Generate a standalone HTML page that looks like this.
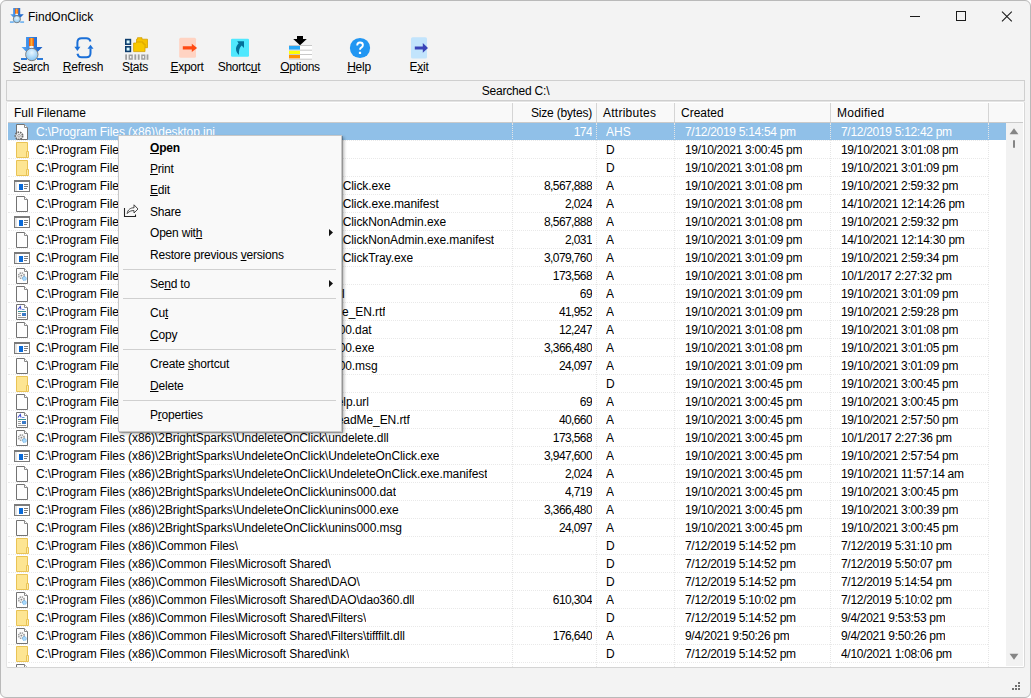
<!DOCTYPE html><html><head><meta charset="utf-8"><style>
*{margin:0;padding:0;box-sizing:border-box}
html,body{width:1031px;height:698px;overflow:hidden;background:#fff}
body{font-family:"Liberation Sans",sans-serif;font-size:12px;color:#000;position:relative}
.a{position:absolute;white-space:nowrap}
#win{position:absolute;left:0;top:0;width:1031px;height:698px;background:#f3f3f3;border-radius:6px;overflow:hidden}
#frame{position:absolute;left:0;top:0;width:1031px;height:698px;border:1px solid #b9b9b9;border-radius:6px}
.tb{position:absolute;top:59px;height:16px;line-height:16px;font-size:12px;text-align:center;letter-spacing:-0.25px}
.u{text-decoration:underline;text-underline-offset:1px}
.row{position:absolute;left:8px;width:998px;height:18px;}
.c{position:absolute;top:0;height:18px;line-height:18px;white-space:nowrap;overflow:hidden;padding-top:1px}
.r{text-align:right}
.mi{position:absolute;left:150px;height:20px;line-height:20px;font-size:12px;letter-spacing:-0.2px}
.sep{position:absolute;left:123px;width:213px;height:1px;background:#d0d0d0}
</style></head><body><div id="win">

<svg class="a" style="left:8px;top:6px" width="18" height="18" viewBox="0 0 28 28">
<path d="M8 3h11v10h5.5l-10.5 10.5L3.5 13H8z" fill="url(#gsh)"/>
<rect x="11" y="4" width="5" height="8.5" fill="url(#gor)"/>
<rect x="11.5" y="12" width="4" height="2" fill="#f4f4f4"/>
<circle cx="13.8" cy="20.5" r="5.6" fill="url(#glens)" stroke="#6a6a6a" stroke-width="1.2"/>
<rect x="3" y="24" width="6" height="2" fill="#4aa0f0"/><rect x="19" y="24" width="6" height="2" fill="#4aa0f0"/>
</svg>
<div class="a" style="left:28px;top:9px;font-size:12px;line-height:16px">FindOnClick</div>
<svg class="a" style="left:900px;top:6px" width="130" height="22">
<path d="M10 10.5h10" stroke="#1a1a1a" stroke-width="1"/>
<rect x="56.5" y="5.5" width="9" height="9" fill="none" stroke="#1a1a1a"/>
<path d="M102 5.6l9.8 9.8M111.8 5.6l-9.8 9.8" stroke="#1a1a1a" stroke-width="1.05"/>
</svg>


<svg class="a" style="left:18px;top:34px" width="28" height="28" viewBox="0 0 28 28">
<defs><linearGradient id="gsh" x1="0" x2="1"><stop offset="0" stop-color="#5aa8f4"/><stop offset="0.5" stop-color="#2f7fe0"/><stop offset="1" stop-color="#1c5fc4"/></linearGradient>
<linearGradient id="gor" x1="0" x2="1"><stop offset="0" stop-color="#e84a10"/><stop offset="0.5" stop-color="#ffb030"/><stop offset="1" stop-color="#e85010"/></linearGradient>
<radialGradient id="glens" cx="0.5" cy="0.35" r="0.6"><stop offset="0" stop-color="#e8f6ff"/><stop offset="1" stop-color="#8cc8f4"/></radialGradient></defs>
<path d="M8 3h11v10h5.5l-10.5 10.5L3.5 13H8z" fill="url(#gsh)"/>
<rect x="11" y="4" width="5" height="8.5" fill="url(#gor)"/>
<rect x="11.5" y="12" width="4" height="2" fill="#f4f4f4"/>
<circle cx="13.8" cy="20.5" r="6.2" fill="url(#glens)" stroke="#7a7a7a" stroke-width="0.9"/>
<rect x="3" y="24" width="6" height="2" fill="#2a7ad8"/><rect x="19" y="24" width="6" height="2" fill="#2a7ad8"/>
</svg>
<svg class="a" style="left:70px;top:34px" width="28" height="28" viewBox="0 0 28 28">
<path d="M7.4 13V8.4Q7.4 4.2 11.6 4.2H16.4Q19.6 4.2 20.5 7.4" fill="none" stroke="#1a6fd8" stroke-width="2"/>
<path d="M4.4 12.8H10.4L7.4 16.9z" fill="#1a6fd8"/>
<path d="M17.5 14.8H23.5L20.5 10.7z" fill="#1a6fd8"/>
<path d="M20.5 14.6V19Q20.5 23.3 16.4 23.3H11.6Q8.2 23.3 7.4 19.8" fill="none" stroke="#1a6fd8" stroke-width="2"/>
</svg>
<svg class="a" style="left:122px;top:34px" width="28" height="28" viewBox="0 0 28 28">
<rect x="3.8" y="5.6" width="4.6" height="4.6" fill="#d8f8ff" stroke="#0c3c6c" stroke-width="1.6"/>
<rect x="3.8" y="12.8" width="4.6" height="4.6" fill="#d8f8ff" stroke="#0c3c6c" stroke-width="1.6"/>
<path d="M14.5 5.2h1v-1.5h4.5v1.5h5.5v8.5h-11z" fill="#f6c200" stroke="#d4a000" stroke-width="0.8"/>
<path d="M11.6 9h2l1.4-1h6v2h2v7.6h-11.4z" fill="#f8c800" stroke="#d4a000" stroke-width="0.8"/>
<g fill="#a0a0a0"><rect x="3.2" y="20.4" width="1.8" height="5.4"/><path d="M6.6 20.4h4.2v5.4h-4.2zM8 22v2.2h1.4v-2.2z" fill-rule="evenodd"/><rect x="12.4" y="20.4" width="1.8" height="5.4"/><rect x="15.8" y="20.4" width="1.8" height="5.4"/><path d="M19.2 20.4h4.2v5.4h-4.2zM20.6 22v2.2h1.4v-2.2z" fill-rule="evenodd"/><rect x="24.6" y="20.4" width="1.8" height="5.4"/></g>
</svg>
<svg class="a" style="left:174px;top:34px" width="28" height="28" viewBox="0 0 28 28">
<rect x="5.2" y="3.8" width="16.8" height="20" rx="1.5" fill="#ffd3c2"/>
<path d="M8.8 12.2h9v-2.4l5.3 4.1-5.3 4.1v-2.5h-9z" fill="#ff4a12"/>
</svg>
<svg class="a" style="left:226px;top:34px" width="28" height="28" viewBox="0 0 28 28">
<rect x="5" y="4.8" width="18" height="18" rx="1.2" fill="#50e8fe"/>
<path d="M11.2 7.2H18V14L15.6 11.6C13.6 13.6 12.6 16.4 13 21C11 19.2 9.8 16.8 10 14.2C10.2 12.4 11.2 10.8 12.6 9.4z" fill="#04709a"/>
</svg>
<svg class="a" style="left:286px;top:33px" width="30" height="30" viewBox="0 0 30 30">
<path d="M11 3h6v3h3.8l-6.8 6.3L7.2 6H11z" fill="#000"/>
<rect x="3" y="12.5" width="23" height="14.2" fill="#fff"/>
<g fill="#c8c8c8"><rect x="3" y="12" width="23" height="1"/><rect x="3" y="16.7" width="23" height="1"/><rect x="3" y="21" width="23" height="1"/><rect x="3" y="25.7" width="23" height="1"/></g>
<rect x="3" y="13" width="11" height="3.6" fill="#28a8f8"/>
<rect x="3" y="17.8" width="11" height="3.2" fill="#ffff00"/>
<rect x="3" y="22" width="11" height="3.4" fill="#ff9200"/>
</svg>
<svg class="a" style="left:346px;top:34px" width="28" height="28" viewBox="0 0 28 28">
<circle cx="14" cy="14" r="10.1" fill="#2196f2"/>
<path d="M11.2 11.4Q11.2 8.5 14 8.5Q16.9 8.5 16.9 11Q16.9 12.6 15.2 13.6Q14 14.3 14 15.8" fill="none" stroke="#fff" stroke-width="1.9"/>
<rect x="12.9" y="17.8" width="2.2" height="2.2" fill="#fff"/>
</svg>
<svg class="a" style="left:406px;top:34px" width="28" height="28" viewBox="0 0 28 28">
<rect x="5" y="3.2" width="16" height="21.3" rx="1.5" fill="#c2e4fc"/>
<path d="M8.8 12.4h8v-3.4l5.2 4.9-5.2 4.9v-3.4h-8z" fill="#3a44b8"/>
</svg>

<div class="tb" style="left:-9px;width:80px"><span class="u">S</span>earch</div>
<div class="tb" style="left:43px;width:80px"><span class="u">R</span>efresh</div>
<div class="tb" style="left:95px;width:80px">S<span class="u">t</span>ats</div>
<div class="tb" style="left:147px;width:80px"><span class="u">E</span>xport</div>
<div class="tb" style="left:199px;width:80px">Shortc<span class="u">u</span>t</div>
<div class="tb" style="left:260px;width:80px"><span class="u">O</span>ptions</div>
<div class="tb" style="left:319px;width:80px"><span class="u">H</span>elp</div>
<div class="tb" style="left:379px;width:80px">E<span class="u">x</span>it</div>
<div class="a" style="left:6px;top:80px;width:1019px;height:21px;border:1px solid #cfcfcf;background:#f3f3f3"></div>
<div class="a" style="left:6px;top:83px;width:1019px;text-align:center;line-height:16px;letter-spacing:-0.2px">Searched C:\</div>
<div class="a" style="left:6px;top:101px;width:1019px;height:567px;background:#fff;border:1px solid #e4e4e4;border-right-color:#d8d8d8;border-bottom-color:#d4d4d4;border-radius:2px"></div>
<div class="a" style="left:8px;top:103px;width:1015px;height:20px;background:#f9f9f9;border-bottom:1px solid #cacaca"></div>
<div class="a" style="left:14px;top:105px;line-height:16px;letter-spacing:0px">Full Filename</div>
<div class="a" style="right:439px;top:105px;line-height:16px;letter-spacing:-0.2px">Size (bytes)</div>
<div class="a" style="left:603px;top:105px;line-height:16px;letter-spacing:0.25px">Attributes</div>
<div class="a" style="left:681px;top:105px;line-height:16px;letter-spacing:0px">Created</div>
<div class="a" style="left:837px;top:105px;line-height:16px;letter-spacing:0.25px">Modified</div>
<div class="a" style="left:512px;top:103px;width:1px;height:19px;background:#d5d5d5"></div>
<div class="a" style="left:596px;top:103px;width:1px;height:19px;background:#d5d5d5"></div>
<div class="a" style="left:674px;top:103px;width:1px;height:19px;background:#d5d5d5"></div>
<div class="a" style="left:830px;top:103px;width:1px;height:19px;background:#d5d5d5"></div>
<div class="a" style="left:988px;top:103px;width:1px;height:19px;background:#d5d5d5"></div>
<div class="a" style="left:8px;top:122px;width:998px;height:545px;overflow:hidden">
<div class="a" style="left:-8px;top:-122px;width:1031px;height:698px">
<div class="a" style="left:8px;top:123px;width:998px;height:17px;background:#90c0e8"></div>
<div class="a" style="left:14px;top:124px;width:16px;height:16px"><svg width="16" height="16" viewBox="0 0 16 16"><path d="M2.5 0.5H10.5L13.5 3.5V15.5H2.5z" fill="#fdfdfd" stroke="#727272"/><path d="M10.5 0.5V3.5H13.5" fill="#fff" stroke="#8a8a8a"/><circle cx="5" cy="11.8" r="3.6" fill="#f0f0f0" stroke="#6a6a6a" stroke-width="1.8" stroke-dasharray="1.6 0.9"/><circle cx="5" cy="11.8" r="1.3" fill="#fff" stroke="#777" stroke-width="0.7"/></svg></div>
<div class="c" style="left:36px;top:122px;color:#fff;letter-spacing:-0.075px">C:\Program Files (x86)\desktop.ini</div>
<div class="c r" style="right:439px;top:122px;color:#fff;letter-spacing:-0.6px">174</div>
<div class="c" style="left:606px;top:122px;color:#fff">AHS</div>
<div class="c" style="left:685px;top:122px;color:#fff;letter-spacing:-0.3px">7/12/2019 5:14:54 pm</div>
<div class="c" style="left:841px;top:122px;color:#fff;letter-spacing:-0.3px">7/12/2019 5:12:42 pm</div>
<div class="a" style="left:8px;top:140px;width:980px;height:1px;border-top:1px dotted #e9e9e9"></div>
<div class="a" style="left:14px;top:142px;width:16px;height:16px"><svg width="16" height="16" viewBox="0 0 16 16"><path d="M2.5 0.5H13.5V15.5H2.5z" fill="#fde592" stroke="#e9c355"/><path d="M12.5 9.5H14.5V15.5H12.5z" fill="#feeaa8" stroke="#e9c355"/></svg></div>
<div class="c" style="left:36px;top:140px;color:#000;letter-spacing:-0.075px">C:\Program Files (x86)\2BrightSparks\</div>
<div class="c r" style="right:439px;top:140px;color:#000;letter-spacing:-0.6px"></div>
<div class="c" style="left:606px;top:140px;color:#000">D</div>
<div class="c" style="left:685px;top:140px;color:#000;letter-spacing:-0.3px">19/10/2021 3:00:45 pm</div>
<div class="c" style="left:841px;top:140px;color:#000;letter-spacing:-0.3px">19/10/2021 3:01:08 pm</div>
<div class="a" style="left:8px;top:158px;width:980px;height:1px;border-top:1px dotted #e9e9e9"></div>
<div class="a" style="left:14px;top:160px;width:16px;height:16px"><svg width="16" height="16" viewBox="0 0 16 16"><path d="M2.5 0.5H13.5V15.5H2.5z" fill="#fde592" stroke="#e9c355"/><path d="M12.5 9.5H14.5V15.5H12.5z" fill="#feeaa8" stroke="#e9c355"/></svg></div>
<div class="c" style="left:36px;top:158px;color:#000;letter-spacing:-0.075px">C:\Program Files (x86)\2BrightSparks\FindOnClick\</div>
<div class="c r" style="right:439px;top:158px;color:#000;letter-spacing:-0.6px"></div>
<div class="c" style="left:606px;top:158px;color:#000">D</div>
<div class="c" style="left:685px;top:158px;color:#000;letter-spacing:-0.3px">19/10/2021 3:01:08 pm</div>
<div class="c" style="left:841px;top:158px;color:#000;letter-spacing:-0.3px">19/10/2021 3:01:09 pm</div>
<div class="a" style="left:8px;top:176px;width:980px;height:1px;border-top:1px dotted #e9e9e9"></div>
<div class="a" style="left:14px;top:178px;width:16px;height:16px"><svg width="16" height="16" viewBox="0 0 16 16"><rect x="0.5" y="2.5" width="15" height="11" fill="#fff" stroke="#7b7b7b"/><rect x="0" y="2" width="16" height="2" fill="#7b7b7b"/><rect x="1" y="4" width="2" height="9" fill="#e6e6e6"/><rect x="5" y="6" width="4" height="6" fill="#0a6ad8"/><path d="M10 6.5h4M10 8.5h4M10 10.5h3" stroke="#7b7b7b"/></svg></div>
<div class="c" style="left:36px;top:176px;color:#000;letter-spacing:-0.075px">C:\Program Files (x86)\2BrightSparks\FindOnClick\FindOnClick.exe</div>
<div class="c r" style="right:439px;top:176px;color:#000;letter-spacing:-0.6px">8,567,888</div>
<div class="c" style="left:606px;top:176px;color:#000">A</div>
<div class="c" style="left:685px;top:176px;color:#000;letter-spacing:-0.3px">19/10/2021 3:01:08 pm</div>
<div class="c" style="left:841px;top:176px;color:#000;letter-spacing:-0.3px">19/10/2021 2:59:32 pm</div>
<div class="a" style="left:8px;top:194px;width:980px;height:1px;border-top:1px dotted #e9e9e9"></div>
<div class="a" style="left:14px;top:196px;width:16px;height:16px"><svg width="16" height="16" viewBox="0 0 16 16"><path d="M2.5 0.5H10.5L13.5 3.5V15.5H2.5z" fill="#fdfdfd" stroke="#727272"/><path d="M10.5 0.5V3.5H13.5" fill="#fff" stroke="#8a8a8a"/></svg></div>
<div class="c" style="left:36px;top:194px;color:#000;letter-spacing:-0.075px">C:\Program Files (x86)\2BrightSparks\FindOnClick\FindOnClick.exe.manifest</div>
<div class="c r" style="right:439px;top:194px;color:#000;letter-spacing:-0.6px">2,024</div>
<div class="c" style="left:606px;top:194px;color:#000">A</div>
<div class="c" style="left:685px;top:194px;color:#000;letter-spacing:-0.3px">19/10/2021 3:01:08 pm</div>
<div class="c" style="left:841px;top:194px;color:#000;letter-spacing:-0.3px">14/10/2021 12:14:26 pm</div>
<div class="a" style="left:8px;top:212px;width:980px;height:1px;border-top:1px dotted #e9e9e9"></div>
<div class="a" style="left:14px;top:214px;width:16px;height:16px"><svg width="16" height="16" viewBox="0 0 16 16"><rect x="0.5" y="2.5" width="15" height="11" fill="#fff" stroke="#7b7b7b"/><rect x="0" y="2" width="16" height="2" fill="#7b7b7b"/><rect x="1" y="4" width="2" height="9" fill="#e6e6e6"/><rect x="5" y="6" width="4" height="6" fill="#0a6ad8"/><path d="M10 6.5h4M10 8.5h4M10 10.5h3" stroke="#7b7b7b"/></svg></div>
<div class="c" style="left:36px;top:212px;color:#000;letter-spacing:-0.075px">C:\Program Files (x86)\2BrightSparks\FindOnClick\FindOnClickNonAdmin.exe</div>
<div class="c r" style="right:439px;top:212px;color:#000;letter-spacing:-0.6px">8,567,888</div>
<div class="c" style="left:606px;top:212px;color:#000">A</div>
<div class="c" style="left:685px;top:212px;color:#000;letter-spacing:-0.3px">19/10/2021 3:01:08 pm</div>
<div class="c" style="left:841px;top:212px;color:#000;letter-spacing:-0.3px">19/10/2021 2:59:32 pm</div>
<div class="a" style="left:8px;top:230px;width:980px;height:1px;border-top:1px dotted #e9e9e9"></div>
<div class="a" style="left:14px;top:232px;width:16px;height:16px"><svg width="16" height="16" viewBox="0 0 16 16"><path d="M2.5 0.5H10.5L13.5 3.5V15.5H2.5z" fill="#fdfdfd" stroke="#727272"/><path d="M10.5 0.5V3.5H13.5" fill="#fff" stroke="#8a8a8a"/></svg></div>
<div class="c" style="left:36px;top:230px;color:#000;letter-spacing:-0.075px">C:\Program Files (x86)\2BrightSparks\FindOnClick\FindOnClickNonAdmin.exe.manifest</div>
<div class="c r" style="right:439px;top:230px;color:#000;letter-spacing:-0.6px">2,031</div>
<div class="c" style="left:606px;top:230px;color:#000">A</div>
<div class="c" style="left:685px;top:230px;color:#000;letter-spacing:-0.3px">19/10/2021 3:01:09 pm</div>
<div class="c" style="left:841px;top:230px;color:#000;letter-spacing:-0.3px">14/10/2021 12:14:30 pm</div>
<div class="a" style="left:8px;top:248px;width:980px;height:1px;border-top:1px dotted #e9e9e9"></div>
<div class="a" style="left:14px;top:250px;width:16px;height:16px"><svg width="16" height="16" viewBox="0 0 16 16"><rect x="0.5" y="2.5" width="15" height="11" fill="#fff" stroke="#7b7b7b"/><rect x="0" y="2" width="16" height="2" fill="#7b7b7b"/><rect x="1" y="4" width="2" height="9" fill="#e6e6e6"/><rect x="5" y="6" width="4" height="6" fill="#0a6ad8"/><path d="M10 6.5h4M10 8.5h4M10 10.5h3" stroke="#7b7b7b"/></svg></div>
<div class="c" style="left:36px;top:248px;color:#000;letter-spacing:-0.075px">C:\Program Files (x86)\2BrightSparks\FindOnClick\FindOnClickTray.exe</div>
<div class="c r" style="right:439px;top:248px;color:#000;letter-spacing:-0.6px">3,079,760</div>
<div class="c" style="left:606px;top:248px;color:#000">A</div>
<div class="c" style="left:685px;top:248px;color:#000;letter-spacing:-0.3px">19/10/2021 3:01:09 pm</div>
<div class="c" style="left:841px;top:248px;color:#000;letter-spacing:-0.3px">19/10/2021 2:59:34 pm</div>
<div class="a" style="left:8px;top:266px;width:980px;height:1px;border-top:1px dotted #e9e9e9"></div>
<div class="a" style="left:14px;top:268px;width:16px;height:16px"><svg width="16" height="16" viewBox="0 0 16 16"><path d="M2.5 0.5H10.5L13.5 3.5V15.5H2.5z" fill="#fdfdfd" stroke="#727272"/><path d="M10.5 0.5V3.5H13.5" fill="#fff" stroke="#8a8a8a"/><circle cx="7.4" cy="7.6" r="2.8" fill="#f4f4f4" stroke="#8a8a8a" stroke-width="1.3" stroke-dasharray="1.4 0.8"/><circle cx="7.4" cy="7.6" r="0.9" fill="#8a8a8a"/><circle cx="10.4" cy="10.6" r="2" fill="#a8d8fa" stroke="#5aa8e8" stroke-width="0.8" stroke-dasharray="1 0.6"/></svg></div>
<div class="c" style="left:36px;top:266px;color:#000;letter-spacing:-0.075px">C:\Program Files (x86)\2BrightSparks\FindOnClick\7z.dll</div>
<div class="c r" style="right:439px;top:266px;color:#000;letter-spacing:-0.6px">173,568</div>
<div class="c" style="left:606px;top:266px;color:#000">A</div>
<div class="c" style="left:685px;top:266px;color:#000;letter-spacing:-0.3px">19/10/2021 3:01:08 pm</div>
<div class="c" style="left:841px;top:266px;color:#000;letter-spacing:-0.3px">10/1/2017 2:27:32 pm</div>
<div class="a" style="left:8px;top:284px;width:980px;height:1px;border-top:1px dotted #e9e9e9"></div>
<div class="a" style="left:14px;top:286px;width:16px;height:16px"><svg width="16" height="16" viewBox="0 0 16 16"><path d="M2.5 0.5H10.5L13.5 3.5V15.5H2.5z" fill="#fdfdfd" stroke="#727272"/><path d="M10.5 0.5V3.5H13.5" fill="#fff" stroke="#8a8a8a"/></svg></div>
<div class="c" style="left:36px;top:284px;color:#000;letter-spacing:-0.075px">C:\Program Files (x86)\2BrightSparks\FindOnClick\Help.url</div>
<div class="c r" style="right:439px;top:284px;color:#000;letter-spacing:-0.6px">69</div>
<div class="c" style="left:606px;top:284px;color:#000">A</div>
<div class="c" style="left:685px;top:284px;color:#000;letter-spacing:-0.3px">19/10/2021 3:01:09 pm</div>
<div class="c" style="left:841px;top:284px;color:#000;letter-spacing:-0.3px">19/10/2021 3:01:09 pm</div>
<div class="a" style="left:8px;top:302px;width:980px;height:1px;border-top:1px dotted #e9e9e9"></div>
<div class="a" style="left:14px;top:304px;width:16px;height:16px"><svg width="16" height="16" viewBox="0 0 16 16"><path d="M2.5 0.5H10.5L13.5 3.5V15.5H2.5z" fill="#fdfdfd" stroke="#727272"/><path d="M10.5 0.5V3.5H13.5" fill="#fff" stroke="#8a8a8a"/><path d="M4 5.5L6.3 2.5L7 5.5" fill="none" stroke="#3a48d0" stroke-width="1.1"/><path d="M8 5.5h2.5" stroke="#6a90e0"/><path d="M4 7.5h8" stroke="#3c9090"/><path d="M4 9.5h3M4 11.5h3M4 13.5h8" stroke="#9a9a9a"/><rect x="8" y="9" width="4" height="3" fill="#3a7ac8"/></svg></div>
<div class="c" style="left:36px;top:302px;color:#000;letter-spacing:-0.075px">C:\Program Files (x86)\2BrightSparks\FindOnClick\ReadMe_EN.rtf</div>
<div class="c r" style="right:439px;top:302px;color:#000;letter-spacing:-0.6px">41,952</div>
<div class="c" style="left:606px;top:302px;color:#000">A</div>
<div class="c" style="left:685px;top:302px;color:#000;letter-spacing:-0.3px">19/10/2021 3:01:09 pm</div>
<div class="c" style="left:841px;top:302px;color:#000;letter-spacing:-0.3px">19/10/2021 2:59:28 pm</div>
<div class="a" style="left:8px;top:320px;width:980px;height:1px;border-top:1px dotted #e9e9e9"></div>
<div class="a" style="left:14px;top:322px;width:16px;height:16px"><svg width="16" height="16" viewBox="0 0 16 16"><path d="M2.5 0.5H10.5L13.5 3.5V15.5H2.5z" fill="#fdfdfd" stroke="#727272"/><path d="M10.5 0.5V3.5H13.5" fill="#fff" stroke="#8a8a8a"/></svg></div>
<div class="c" style="left:36px;top:320px;color:#000;letter-spacing:-0.075px">C:\Program Files (x86)\2BrightSparks\FindOnClick\unins000.dat</div>
<div class="c r" style="right:439px;top:320px;color:#000;letter-spacing:-0.6px">12,247</div>
<div class="c" style="left:606px;top:320px;color:#000">A</div>
<div class="c" style="left:685px;top:320px;color:#000;letter-spacing:-0.3px">19/10/2021 3:01:08 pm</div>
<div class="c" style="left:841px;top:320px;color:#000;letter-spacing:-0.3px">19/10/2021 3:01:08 pm</div>
<div class="a" style="left:8px;top:338px;width:980px;height:1px;border-top:1px dotted #e9e9e9"></div>
<div class="a" style="left:14px;top:340px;width:16px;height:16px"><svg width="16" height="16" viewBox="0 0 16 16"><rect x="0.5" y="2.5" width="15" height="11" fill="#fff" stroke="#7b7b7b"/><rect x="0" y="2" width="16" height="2" fill="#7b7b7b"/><rect x="1" y="4" width="2" height="9" fill="#e6e6e6"/><rect x="5" y="6" width="4" height="6" fill="#0a6ad8"/><path d="M10 6.5h4M10 8.5h4M10 10.5h3" stroke="#7b7b7b"/></svg></div>
<div class="c" style="left:36px;top:338px;color:#000;letter-spacing:-0.075px">C:\Program Files (x86)\2BrightSparks\FindOnClick\unins000.exe</div>
<div class="c r" style="right:439px;top:338px;color:#000;letter-spacing:-0.6px">3,366,480</div>
<div class="c" style="left:606px;top:338px;color:#000">A</div>
<div class="c" style="left:685px;top:338px;color:#000;letter-spacing:-0.3px">19/10/2021 3:01:08 pm</div>
<div class="c" style="left:841px;top:338px;color:#000;letter-spacing:-0.3px">19/10/2021 3:01:05 pm</div>
<div class="a" style="left:8px;top:356px;width:980px;height:1px;border-top:1px dotted #e9e9e9"></div>
<div class="a" style="left:14px;top:358px;width:16px;height:16px"><svg width="16" height="16" viewBox="0 0 16 16"><path d="M2.5 0.5H10.5L13.5 3.5V15.5H2.5z" fill="#fdfdfd" stroke="#727272"/><path d="M10.5 0.5V3.5H13.5" fill="#fff" stroke="#8a8a8a"/></svg></div>
<div class="c" style="left:36px;top:356px;color:#000;letter-spacing:-0.075px">C:\Program Files (x86)\2BrightSparks\FindOnClick\unins000.msg</div>
<div class="c r" style="right:439px;top:356px;color:#000;letter-spacing:-0.6px">24,097</div>
<div class="c" style="left:606px;top:356px;color:#000">A</div>
<div class="c" style="left:685px;top:356px;color:#000;letter-spacing:-0.3px">19/10/2021 3:01:09 pm</div>
<div class="c" style="left:841px;top:356px;color:#000;letter-spacing:-0.3px">19/10/2021 3:01:09 pm</div>
<div class="a" style="left:8px;top:374px;width:980px;height:1px;border-top:1px dotted #e9e9e9"></div>
<div class="a" style="left:14px;top:376px;width:16px;height:16px"><svg width="16" height="16" viewBox="0 0 16 16"><path d="M2.5 0.5H13.5V15.5H2.5z" fill="#fde592" stroke="#e9c355"/><path d="M12.5 9.5H14.5V15.5H12.5z" fill="#feeaa8" stroke="#e9c355"/></svg></div>
<div class="c" style="left:36px;top:374px;color:#000;letter-spacing:-0.075px">C:\Program Files (x86)\2BrightSparks\UndeleteOnClick\</div>
<div class="c r" style="right:439px;top:374px;color:#000;letter-spacing:-0.6px"></div>
<div class="c" style="left:606px;top:374px;color:#000">D</div>
<div class="c" style="left:685px;top:374px;color:#000;letter-spacing:-0.3px">19/10/2021 3:00:45 pm</div>
<div class="c" style="left:841px;top:374px;color:#000;letter-spacing:-0.3px">19/10/2021 3:00:45 pm</div>
<div class="a" style="left:8px;top:392px;width:980px;height:1px;border-top:1px dotted #e9e9e9"></div>
<div class="a" style="left:14px;top:394px;width:16px;height:16px"><svg width="16" height="16" viewBox="0 0 16 16"><path d="M2.5 0.5H10.5L13.5 3.5V15.5H2.5z" fill="#fdfdfd" stroke="#727272"/><path d="M10.5 0.5V3.5H13.5" fill="#fff" stroke="#8a8a8a"/></svg></div>
<div class="c" style="left:36px;top:392px;color:#000;letter-spacing:-0.075px">C:\Program Files (x86)\2BrightSparks\UndeleteOnClick\Help.url</div>
<div class="c r" style="right:439px;top:392px;color:#000;letter-spacing:-0.6px">69</div>
<div class="c" style="left:606px;top:392px;color:#000">A</div>
<div class="c" style="left:685px;top:392px;color:#000;letter-spacing:-0.3px">19/10/2021 3:00:45 pm</div>
<div class="c" style="left:841px;top:392px;color:#000;letter-spacing:-0.3px">19/10/2021 3:00:45 pm</div>
<div class="a" style="left:8px;top:410px;width:980px;height:1px;border-top:1px dotted #e9e9e9"></div>
<div class="a" style="left:14px;top:412px;width:16px;height:16px"><svg width="16" height="16" viewBox="0 0 16 16"><path d="M2.5 0.5H10.5L13.5 3.5V15.5H2.5z" fill="#fdfdfd" stroke="#727272"/><path d="M10.5 0.5V3.5H13.5" fill="#fff" stroke="#8a8a8a"/><path d="M4 5.5L6.3 2.5L7 5.5" fill="none" stroke="#3a48d0" stroke-width="1.1"/><path d="M8 5.5h2.5" stroke="#6a90e0"/><path d="M4 7.5h8" stroke="#3c9090"/><path d="M4 9.5h3M4 11.5h3M4 13.5h8" stroke="#9a9a9a"/><rect x="8" y="9" width="4" height="3" fill="#3a7ac8"/></svg></div>
<div class="c" style="left:36px;top:410px;color:#000;letter-spacing:-0.075px">C:\Program Files (x86)\2BrightSparks\UndeleteOnClick\ReadMe_EN.rtf</div>
<div class="c r" style="right:439px;top:410px;color:#000;letter-spacing:-0.6px">40,660</div>
<div class="c" style="left:606px;top:410px;color:#000">A</div>
<div class="c" style="left:685px;top:410px;color:#000;letter-spacing:-0.3px">19/10/2021 3:00:45 pm</div>
<div class="c" style="left:841px;top:410px;color:#000;letter-spacing:-0.3px">19/10/2021 2:57:50 pm</div>
<div class="a" style="left:8px;top:428px;width:980px;height:1px;border-top:1px dotted #e9e9e9"></div>
<div class="a" style="left:14px;top:430px;width:16px;height:16px"><svg width="16" height="16" viewBox="0 0 16 16"><path d="M2.5 0.5H10.5L13.5 3.5V15.5H2.5z" fill="#fdfdfd" stroke="#727272"/><path d="M10.5 0.5V3.5H13.5" fill="#fff" stroke="#8a8a8a"/><circle cx="7.4" cy="7.6" r="2.8" fill="#f4f4f4" stroke="#8a8a8a" stroke-width="1.3" stroke-dasharray="1.4 0.8"/><circle cx="7.4" cy="7.6" r="0.9" fill="#8a8a8a"/><circle cx="10.4" cy="10.6" r="2" fill="#a8d8fa" stroke="#5aa8e8" stroke-width="0.8" stroke-dasharray="1 0.6"/></svg></div>
<div class="c" style="left:36px;top:428px;color:#000;letter-spacing:-0.075px">C:\Program Files (x86)\2BrightSparks\UndeleteOnClick\undelete.dll</div>
<div class="c r" style="right:439px;top:428px;color:#000;letter-spacing:-0.6px">173,568</div>
<div class="c" style="left:606px;top:428px;color:#000">A</div>
<div class="c" style="left:685px;top:428px;color:#000;letter-spacing:-0.3px">19/10/2021 3:00:45 pm</div>
<div class="c" style="left:841px;top:428px;color:#000;letter-spacing:-0.3px">10/1/2017 2:27:36 pm</div>
<div class="a" style="left:8px;top:446px;width:980px;height:1px;border-top:1px dotted #e9e9e9"></div>
<div class="a" style="left:14px;top:448px;width:16px;height:16px"><svg width="16" height="16" viewBox="0 0 16 16"><rect x="0.5" y="2.5" width="15" height="11" fill="#fff" stroke="#7b7b7b"/><rect x="0" y="2" width="16" height="2" fill="#7b7b7b"/><rect x="1" y="4" width="2" height="9" fill="#e6e6e6"/><rect x="5" y="6" width="4" height="6" fill="#0a6ad8"/><path d="M10 6.5h4M10 8.5h4M10 10.5h3" stroke="#7b7b7b"/></svg></div>
<div class="c" style="left:36px;top:446px;color:#000;letter-spacing:-0.075px">C:\Program Files (x86)\2BrightSparks\UndeleteOnClick\UndeleteOnClick.exe</div>
<div class="c r" style="right:439px;top:446px;color:#000;letter-spacing:-0.6px">3,947,600</div>
<div class="c" style="left:606px;top:446px;color:#000">A</div>
<div class="c" style="left:685px;top:446px;color:#000;letter-spacing:-0.3px">19/10/2021 3:00:45 pm</div>
<div class="c" style="left:841px;top:446px;color:#000;letter-spacing:-0.3px">19/10/2021 2:57:54 pm</div>
<div class="a" style="left:8px;top:464px;width:980px;height:1px;border-top:1px dotted #e9e9e9"></div>
<div class="a" style="left:14px;top:466px;width:16px;height:16px"><svg width="16" height="16" viewBox="0 0 16 16"><path d="M2.5 0.5H10.5L13.5 3.5V15.5H2.5z" fill="#fdfdfd" stroke="#727272"/><path d="M10.5 0.5V3.5H13.5" fill="#fff" stroke="#8a8a8a"/></svg></div>
<div class="c" style="left:36px;top:464px;color:#000;letter-spacing:-0.075px">C:\Program Files (x86)\2BrightSparks\UndeleteOnClick\UndeleteOnClick.exe.manifest</div>
<div class="c r" style="right:439px;top:464px;color:#000;letter-spacing:-0.6px">2,024</div>
<div class="c" style="left:606px;top:464px;color:#000">A</div>
<div class="c" style="left:685px;top:464px;color:#000;letter-spacing:-0.3px">19/10/2021 3:00:45 pm</div>
<div class="c" style="left:841px;top:464px;color:#000;letter-spacing:-0.3px">19/10/2021 11:57:14 am</div>
<div class="a" style="left:8px;top:482px;width:980px;height:1px;border-top:1px dotted #e9e9e9"></div>
<div class="a" style="left:14px;top:484px;width:16px;height:16px"><svg width="16" height="16" viewBox="0 0 16 16"><path d="M2.5 0.5H10.5L13.5 3.5V15.5H2.5z" fill="#fdfdfd" stroke="#727272"/><path d="M10.5 0.5V3.5H13.5" fill="#fff" stroke="#8a8a8a"/></svg></div>
<div class="c" style="left:36px;top:482px;color:#000;letter-spacing:-0.075px">C:\Program Files (x86)\2BrightSparks\UndeleteOnClick\unins000.dat</div>
<div class="c r" style="right:439px;top:482px;color:#000;letter-spacing:-0.6px">4,719</div>
<div class="c" style="left:606px;top:482px;color:#000">A</div>
<div class="c" style="left:685px;top:482px;color:#000;letter-spacing:-0.3px">19/10/2021 3:00:45 pm</div>
<div class="c" style="left:841px;top:482px;color:#000;letter-spacing:-0.3px">19/10/2021 3:00:45 pm</div>
<div class="a" style="left:8px;top:500px;width:980px;height:1px;border-top:1px dotted #e9e9e9"></div>
<div class="a" style="left:14px;top:502px;width:16px;height:16px"><svg width="16" height="16" viewBox="0 0 16 16"><rect x="0.5" y="2.5" width="15" height="11" fill="#fff" stroke="#7b7b7b"/><rect x="0" y="2" width="16" height="2" fill="#7b7b7b"/><rect x="1" y="4" width="2" height="9" fill="#e6e6e6"/><rect x="5" y="6" width="4" height="6" fill="#0a6ad8"/><path d="M10 6.5h4M10 8.5h4M10 10.5h3" stroke="#7b7b7b"/></svg></div>
<div class="c" style="left:36px;top:500px;color:#000;letter-spacing:-0.075px">C:\Program Files (x86)\2BrightSparks\UndeleteOnClick\unins000.exe</div>
<div class="c r" style="right:439px;top:500px;color:#000;letter-spacing:-0.6px">3,366,480</div>
<div class="c" style="left:606px;top:500px;color:#000">A</div>
<div class="c" style="left:685px;top:500px;color:#000;letter-spacing:-0.3px">19/10/2021 3:00:45 pm</div>
<div class="c" style="left:841px;top:500px;color:#000;letter-spacing:-0.3px">19/10/2021 3:00:39 pm</div>
<div class="a" style="left:8px;top:518px;width:980px;height:1px;border-top:1px dotted #e9e9e9"></div>
<div class="a" style="left:14px;top:520px;width:16px;height:16px"><svg width="16" height="16" viewBox="0 0 16 16"><path d="M2.5 0.5H10.5L13.5 3.5V15.5H2.5z" fill="#fdfdfd" stroke="#727272"/><path d="M10.5 0.5V3.5H13.5" fill="#fff" stroke="#8a8a8a"/></svg></div>
<div class="c" style="left:36px;top:518px;color:#000;letter-spacing:-0.075px">C:\Program Files (x86)\2BrightSparks\UndeleteOnClick\unins000.msg</div>
<div class="c r" style="right:439px;top:518px;color:#000;letter-spacing:-0.6px">24,097</div>
<div class="c" style="left:606px;top:518px;color:#000">A</div>
<div class="c" style="left:685px;top:518px;color:#000;letter-spacing:-0.3px">19/10/2021 3:00:45 pm</div>
<div class="c" style="left:841px;top:518px;color:#000;letter-spacing:-0.3px">19/10/2021 3:00:45 pm</div>
<div class="a" style="left:8px;top:536px;width:980px;height:1px;border-top:1px dotted #e9e9e9"></div>
<div class="a" style="left:14px;top:538px;width:16px;height:16px"><svg width="16" height="16" viewBox="0 0 16 16"><path d="M2.5 0.5H13.5V15.5H2.5z" fill="#fde592" stroke="#e9c355"/><path d="M12.5 9.5H14.5V15.5H12.5z" fill="#feeaa8" stroke="#e9c355"/></svg></div>
<div class="c" style="left:36px;top:536px;color:#000;letter-spacing:-0.075px">C:\Program Files (x86)\Common Files\</div>
<div class="c r" style="right:439px;top:536px;color:#000;letter-spacing:-0.6px"></div>
<div class="c" style="left:606px;top:536px;color:#000">D</div>
<div class="c" style="left:685px;top:536px;color:#000;letter-spacing:-0.3px">7/12/2019 5:14:52 pm</div>
<div class="c" style="left:841px;top:536px;color:#000;letter-spacing:-0.3px">7/12/2019 5:31:10 pm</div>
<div class="a" style="left:8px;top:554px;width:980px;height:1px;border-top:1px dotted #e9e9e9"></div>
<div class="a" style="left:14px;top:556px;width:16px;height:16px"><svg width="16" height="16" viewBox="0 0 16 16"><path d="M2.5 0.5H13.5V15.5H2.5z" fill="#fde592" stroke="#e9c355"/><path d="M12.5 9.5H14.5V15.5H12.5z" fill="#feeaa8" stroke="#e9c355"/></svg></div>
<div class="c" style="left:36px;top:554px;color:#000;letter-spacing:-0.075px">C:\Program Files (x86)\Common Files\Microsoft Shared\</div>
<div class="c r" style="right:439px;top:554px;color:#000;letter-spacing:-0.6px"></div>
<div class="c" style="left:606px;top:554px;color:#000">D</div>
<div class="c" style="left:685px;top:554px;color:#000;letter-spacing:-0.3px">7/12/2019 5:14:52 pm</div>
<div class="c" style="left:841px;top:554px;color:#000;letter-spacing:-0.3px">7/12/2019 5:50:07 pm</div>
<div class="a" style="left:8px;top:572px;width:980px;height:1px;border-top:1px dotted #e9e9e9"></div>
<div class="a" style="left:14px;top:574px;width:16px;height:16px"><svg width="16" height="16" viewBox="0 0 16 16"><path d="M2.5 0.5H13.5V15.5H2.5z" fill="#fde592" stroke="#e9c355"/><path d="M12.5 9.5H14.5V15.5H12.5z" fill="#feeaa8" stroke="#e9c355"/></svg></div>
<div class="c" style="left:36px;top:572px;color:#000;letter-spacing:-0.075px">C:\Program Files (x86)\Common Files\Microsoft Shared\DAO\</div>
<div class="c r" style="right:439px;top:572px;color:#000;letter-spacing:-0.6px"></div>
<div class="c" style="left:606px;top:572px;color:#000">D</div>
<div class="c" style="left:685px;top:572px;color:#000;letter-spacing:-0.3px">7/12/2019 5:14:52 pm</div>
<div class="c" style="left:841px;top:572px;color:#000;letter-spacing:-0.3px">7/12/2019 5:14:54 pm</div>
<div class="a" style="left:8px;top:590px;width:980px;height:1px;border-top:1px dotted #e9e9e9"></div>
<div class="a" style="left:14px;top:592px;width:16px;height:16px"><svg width="16" height="16" viewBox="0 0 16 16"><path d="M2.5 0.5H10.5L13.5 3.5V15.5H2.5z" fill="#fdfdfd" stroke="#727272"/><path d="M10.5 0.5V3.5H13.5" fill="#fff" stroke="#8a8a8a"/><circle cx="7.4" cy="7.6" r="2.8" fill="#f4f4f4" stroke="#8a8a8a" stroke-width="1.3" stroke-dasharray="1.4 0.8"/><circle cx="7.4" cy="7.6" r="0.9" fill="#8a8a8a"/><circle cx="10.4" cy="10.6" r="2" fill="#a8d8fa" stroke="#5aa8e8" stroke-width="0.8" stroke-dasharray="1 0.6"/></svg></div>
<div class="c" style="left:36px;top:590px;color:#000;letter-spacing:-0.075px">C:\Program Files (x86)\Common Files\Microsoft Shared\DAO\dao360.dll</div>
<div class="c r" style="right:439px;top:590px;color:#000;letter-spacing:-0.6px">610,304</div>
<div class="c" style="left:606px;top:590px;color:#000">A</div>
<div class="c" style="left:685px;top:590px;color:#000;letter-spacing:-0.3px">7/12/2019 5:10:02 pm</div>
<div class="c" style="left:841px;top:590px;color:#000;letter-spacing:-0.3px">7/12/2019 5:10:02 pm</div>
<div class="a" style="left:8px;top:608px;width:980px;height:1px;border-top:1px dotted #e9e9e9"></div>
<div class="a" style="left:14px;top:610px;width:16px;height:16px"><svg width="16" height="16" viewBox="0 0 16 16"><path d="M2.5 0.5H13.5V15.5H2.5z" fill="#fde592" stroke="#e9c355"/><path d="M12.5 9.5H14.5V15.5H12.5z" fill="#feeaa8" stroke="#e9c355"/></svg></div>
<div class="c" style="left:36px;top:608px;color:#000;letter-spacing:-0.075px">C:\Program Files (x86)\Common Files\Microsoft Shared\Filters\</div>
<div class="c r" style="right:439px;top:608px;color:#000;letter-spacing:-0.6px"></div>
<div class="c" style="left:606px;top:608px;color:#000">D</div>
<div class="c" style="left:685px;top:608px;color:#000;letter-spacing:-0.3px">7/12/2019 5:14:52 pm</div>
<div class="c" style="left:841px;top:608px;color:#000;letter-spacing:-0.3px">9/4/2021 9:53:53 pm</div>
<div class="a" style="left:8px;top:626px;width:980px;height:1px;border-top:1px dotted #e9e9e9"></div>
<div class="a" style="left:14px;top:628px;width:16px;height:16px"><svg width="16" height="16" viewBox="0 0 16 16"><path d="M2.5 0.5H10.5L13.5 3.5V15.5H2.5z" fill="#fdfdfd" stroke="#727272"/><path d="M10.5 0.5V3.5H13.5" fill="#fff" stroke="#8a8a8a"/><circle cx="7.4" cy="7.6" r="2.8" fill="#f4f4f4" stroke="#8a8a8a" stroke-width="1.3" stroke-dasharray="1.4 0.8"/><circle cx="7.4" cy="7.6" r="0.9" fill="#8a8a8a"/><circle cx="10.4" cy="10.6" r="2" fill="#a8d8fa" stroke="#5aa8e8" stroke-width="0.8" stroke-dasharray="1 0.6"/></svg></div>
<div class="c" style="left:36px;top:626px;color:#000;letter-spacing:-0.075px">C:\Program Files (x86)\Common Files\Microsoft Shared\Filters\tifffilt.dll</div>
<div class="c r" style="right:439px;top:626px;color:#000;letter-spacing:-0.6px">176,640</div>
<div class="c" style="left:606px;top:626px;color:#000">A</div>
<div class="c" style="left:685px;top:626px;color:#000;letter-spacing:-0.3px">9/4/2021 9:50:26 pm</div>
<div class="c" style="left:841px;top:626px;color:#000;letter-spacing:-0.3px">9/4/2021 9:50:26 pm</div>
<div class="a" style="left:8px;top:644px;width:980px;height:1px;border-top:1px dotted #e9e9e9"></div>
<div class="a" style="left:14px;top:646px;width:16px;height:16px"><svg width="16" height="16" viewBox="0 0 16 16"><path d="M2.5 0.5H13.5V15.5H2.5z" fill="#fde592" stroke="#e9c355"/><path d="M12.5 9.5H14.5V15.5H12.5z" fill="#feeaa8" stroke="#e9c355"/></svg></div>
<div class="c" style="left:36px;top:644px;color:#000;letter-spacing:-0.075px">C:\Program Files (x86)\Common Files\Microsoft Shared\ink\</div>
<div class="c r" style="right:439px;top:644px;color:#000;letter-spacing:-0.6px"></div>
<div class="c" style="left:606px;top:644px;color:#000">D</div>
<div class="c" style="left:685px;top:644px;color:#000;letter-spacing:-0.3px">7/12/2019 5:14:52 pm</div>
<div class="c" style="left:841px;top:644px;color:#000;letter-spacing:-0.3px">4/10/2021 1:08:06 pm</div>
<div class="a" style="left:8px;top:662px;width:980px;height:1px;border-top:1px dotted #e9e9e9"></div>
<div class="a" style="left:14px;top:664px;width:16px;height:16px"><svg width="16" height="16" viewBox="0 0 16 16"><path d="M2.5 0.5H10.5L13.5 3.5V15.5H2.5z" fill="#fdfdfd" stroke="#727272"/><path d="M10.5 0.5V3.5H13.5" fill="#fff" stroke="#8a8a8a"/></svg></div>
<div class="c" style="left:36px;top:662px;color:#000;letter-spacing:-0.075px">C:\Program Files (x86)\Common Files\Microsoft Shared\ink\desktop.ini</div>
<div class="c r" style="right:439px;top:662px;color:#000;letter-spacing:-0.6px"></div>
<div class="c" style="left:606px;top:662px;color:#000"></div>
<div class="c" style="left:685px;top:662px;color:#000;letter-spacing:-0.3px"></div>
<div class="c" style="left:841px;top:662px;color:#000;letter-spacing:-0.3px"></div>
<div class="a" style="left:8px;top:680px;width:980px;height:1px;border-top:1px dotted #e9e9e9"></div>
<div class="a" style="left:512px;top:123px;width:1px;height:544px;border-left:1px dotted #e6e6e6"></div>
<div class="a" style="left:596px;top:123px;width:1px;height:544px;border-left:1px dotted #e6e6e6"></div>
<div class="a" style="left:674px;top:123px;width:1px;height:544px;border-left:1px dotted #e6e6e6"></div>
<div class="a" style="left:830px;top:123px;width:1px;height:544px;border-left:1px dotted #e6e6e6"></div>
<div class="a" style="left:988px;top:123px;width:1px;height:544px;border-left:1px dotted #e6e6e6"></div>
</div></div>
<div class="a" style="left:1006px;top:123px;width:17px;height:543px;background:#f2f2f2"></div>
<svg class="a" style="left:1009px;top:127px" width="10" height="8"><path d="M0.6 7.2h8.8L5 1.2z" fill="#858585"/></svg>
<div class="a" style="left:1013px;top:140px;width:2px;height:8px;background:#858585;border-radius:1px"></div>
<svg class="a" style="left:1009px;top:653px" width="10" height="8"><path d="M0.6 0.8h8.8L5 6.8z" fill="#858585"/></svg>

<svg class="a" style="left:1011px;top:678px" width="20" height="20"><rect x="7" y="4" width="2" height="2" fill="#6f6f6f"/><rect x="4" y="7" width="2" height="2" fill="#6f6f6f"/><rect x="7" y="7" width="2" height="2" fill="#6f6f6f"/><rect x="1" y="10" width="2" height="2" fill="#6f6f6f"/><rect x="4" y="10" width="2" height="2" fill="#6f6f6f"/><rect x="7" y="10" width="2" height="2" fill="#6f6f6f"/></svg>
<div class="a" style="left:118px;top:135px;width:224px;height:297px;background:#f9f9f9;border:1px solid #c8c8c8;box-shadow:1px 1px 0 rgba(0,0,0,0.22),2px 2px 3px rgba(0,0,0,0.3)"></div>
<div class="mi" style="top:138px;font-weight:bold;"><span class="u">O</span>pen</div>
<div class="mi" style="top:159px;"><span class="u">P</span>rint</div>
<div class="mi" style="top:180px;"><span class="u">E</span>dit</div>
<div class="mi" style="top:202px;">Share</div>
<div class="mi" style="top:223px;">Open wit<span class="u">h</span></div>
<div class="mi" style="top:245px;">Restore previous <span class="u">v</span>ersions</div>
<div class="mi" style="top:274px;">Se<span class="u">n</span>d to</div>
<div class="mi" style="top:303px;">Cu<span class="u">t</span></div>
<div class="mi" style="top:325px;"><span class="u">C</span>opy</div>
<div class="mi" style="top:354px;">Create <span class="u">s</span>hortcut</div>
<div class="mi" style="top:376px;"><span class="u">D</span>elete</div>
<div class="mi" style="top:405px;">P<span class="u">r</span>operties</div>
<div class="sep" style="top:269px"></div>
<div class="sep" style="top:298px"></div>
<div class="sep" style="top:349px"></div>
<div class="sep" style="top:400px"></div>
<svg class="a" style="left:328px;top:228px" width="6" height="9"><path d="M1 1l4 3.6-4 3.6z" fill="#111"/></svg>
<svg class="a" style="left:328px;top:279px" width="6" height="9"><path d="M1 1l4 3.6-4 3.6z" fill="#111"/></svg>
<svg class="a" style="left:123px;top:203px" width="16" height="16" viewBox="0 0 16 16"><path d="M1.5 5V13.5H12.5V11.5" fill="none" stroke="#222" stroke-width="1.1"/><path d="M4.2 10.6C4.6 6.6 7.8 4.6 11 4.8V1.8L15 6L11 10V7.6C8.4 7.4 5.9 8.4 4.2 10.6z" fill="none" stroke="#333" stroke-width="0.9" stroke-linejoin="round"/></svg>
</div><div id="frame"></div></body></html>
